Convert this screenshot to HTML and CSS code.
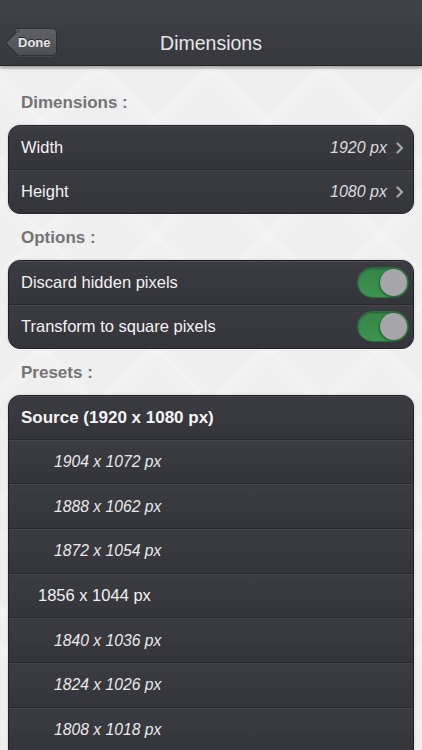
FILE: index.html
```html
<!DOCTYPE html>
<html>
<head>
<meta charset="utf-8">
<link rel="stylesheet" href="styles.css">
</head>
<body>
<div class="screen">
  <header class="nav">
    <button class="done">Done</button>
    <div class="title">Dimensions</div>
  </header>
  <main class="content">
    <div class="label">Dimensions :</div>
    <div class="card">
      <div class="row"><span class="name">Width</span><span class="value">1920 px</span><span class="chev"><svg width="8" height="12" viewBox="0 0 8 12"><path d="M1.5 1.5 L6 6 L1.5 10.5" fill="none" stroke="#a9a9ad" stroke-width="2.2" stroke-linecap="round" stroke-linejoin="round"/></svg></span></div>
      <div class="row"><span class="name">Height</span><span class="value">1080 px</span><span class="chev"><svg width="8" height="12" viewBox="0 0 8 12"><path d="M1.5 1.5 L6 6 L1.5 10.5" fill="none" stroke="#a9a9ad" stroke-width="2.2" stroke-linecap="round" stroke-linejoin="round"/></svg></span></div>
    </div>
    <div class="label">Options :</div>
    <div class="card">
      <div class="row"><span class="name">Discard hidden pixels</span><span class="toggle"><span class="knob"></span></span></div>
      <div class="row"><span class="name">Transform to square pixels</span><span class="toggle"><span class="knob"></span></span></div>
    </div>
    <div class="label">Presets :</div>
    <div class="card open">
      <div class="row preset source">Source (1920 x 1080 px)</div>
      <div class="row preset sub">1904 x 1072 px</div>
      <div class="row preset sub">1888 x 1062 px</div>
      <div class="row preset sub">1872 x 1054 px</div>
      <div class="row preset mid">1856 x 1044 px</div>
      <div class="row preset sub">1840 x 1036 px</div>
      <div class="row preset sub">1824 x 1026 px</div>
      <div class="row preset sub">1808 x 1018 px</div>
    </div>
  </main>
</div>
</body>
</html>
```

FILE: styles.css
```css
* { box-sizing: border-box; }
html, body { margin: 0; padding: 0; }
body {
  width: 422px;
  height: 750px;
  overflow: hidden;
  font-family: "Liberation Sans", Arial, sans-serif;
  background: #f1f1f1;
}
.screen {
  width: 422px;
  height: 750px;
  overflow: hidden;
  display: flex;
  flex-direction: column;
  background-color: #efefef;
  background-image:
    repeating-linear-gradient(45deg, rgba(255,255,255,0) 0 60px, rgba(255,255,255,0.22) 76px, rgba(255,255,255,0) 78px 80px),
    repeating-linear-gradient(-45deg, rgba(255,255,255,0) 0 60px, rgba(255,255,255,0.22) 76px, rgba(255,255,255,0) 78px 80px);
}
.nav {
  position: relative;
  height: 66px;
  flex: none;
  display: flex;
  align-items: flex-end;
  padding: 0 0 9px 16px;
  background: linear-gradient(#414149, #37373e);
  border-bottom: 1px solid #26262b;
  box-shadow: 0 2px 3px rgba(0,0,0,0.35);
  z-index: 2;
}
.done {
  position: relative;
  z-index: 1;
  isolation: isolate;
  height: 28px;
  width: 41px;
  padding: 0 0 0 2px;
  text-align: left;
  border: 1px solid #2e2e33;
  border-left: none;
  border-radius: 0 5px 5px 0;
  background: linear-gradient(#606068, #4f4f56);
  color: #e8e8ea;
  font-family: "Liberation Sans", Arial, sans-serif;
  font-weight: bold;
  font-size: 13px;
  text-shadow: 0 -1px 0 rgba(0,0,0,0.6);
  box-shadow: 0 1px 0 rgba(255,255,255,0.08);
}
.done::before {
  content: "";
  position: absolute;
  left: -7px;
  top: 3.5px;
  width: 19px;
  height: 19px;
  transform: rotate(45deg);
  border-radius: 2px;
  border-left: 1px solid #2e2e33;
  border-bottom: 1px solid #2e2e33;
  background: linear-gradient(-45deg, #4f4f56, #606068);
  z-index: -1;
}
.title {
  position: absolute;
  left: 0;
  right: 0;
  top: 33px;
  text-align: center;
  color: #e6e6e8;
  font-size: 19.5px;
  line-height: 20px;
  pointer-events: none;
}
.content {
  padding: 13px 8px 0 8px;
  display: flex;
  flex-direction: column;
}
.label {
  height: 46px;
  line-height: 48px;
  padding-left: 13px;
  color: #747476;
  font-weight: bold;
  font-size: 17px;
}
.card {
  border: 1px solid #232327;
  border-radius: 12px;
  overflow: hidden;
  background: #37373e;
  box-shadow: 0 1px 1px rgba(255,255,255,0.9), 0 0 2px rgba(0,0,0,0.25);
}
.card.open {
  border-bottom-left-radius: 0;
  border-bottom-right-radius: 0;
}
.row {
  height: 44.5px;
  display: flex;
  align-items: center;
  padding: 0 0 0 12px;
  background: linear-gradient(#3b3b42, #34343b);
  border-top: 1px solid #47474e;
  border-bottom: 1px solid #27272c;
  color: #f2f2f2;
  font-size: 16.5px;
}
.card > .row:first-child { border-top-color: #4a4a51; height: 43.5px; }
.card > .row:last-child { border-bottom: none; height: 43.5px; }
.name { flex: 1; }
.value {
  font-style: italic;
  color: #dcdcde;
  font-size: 16px;
}
.chev {
  display: flex;
  align-items: center;
  width: 26px;
  justify-content: center;
  padding-top: 1px;
}
.toggle {
  position: relative;
  width: 52px;
  height: 31px;
  margin-right: 4px;
  border-radius: 16px;
  background: linear-gradient(#358548, #3e9451);
  border: 1px solid #2d6e3c;
  box-shadow: inset 0 1px 2px rgba(0,0,0,0.3);
}
.knob {
  position: absolute;
  right: 1px;
  top: 1px;
  width: 27px;
  height: 27px;
  border-radius: 50%;
  background: #a6a6aa;
  box-shadow: -1px 1px 2px rgba(0,0,0,0.4);
}
.card.open > .row.preset { height: 44.67px; border-bottom: 1px solid #27272c; }
.card.open > .row.preset:first-child { height: 43.67px; }
.source {
  font-weight: bold;
  font-size: 17px;
  color: #f4f4f4;
}
.sub {
  padding-left: 45px;
  font-style: italic;
  font-size: 15.7px;
  color: #eaeaea;
}
.mid {
  padding-left: 29px;
  font-size: 16.5px;
  color: #f2f2f2;
}
```
